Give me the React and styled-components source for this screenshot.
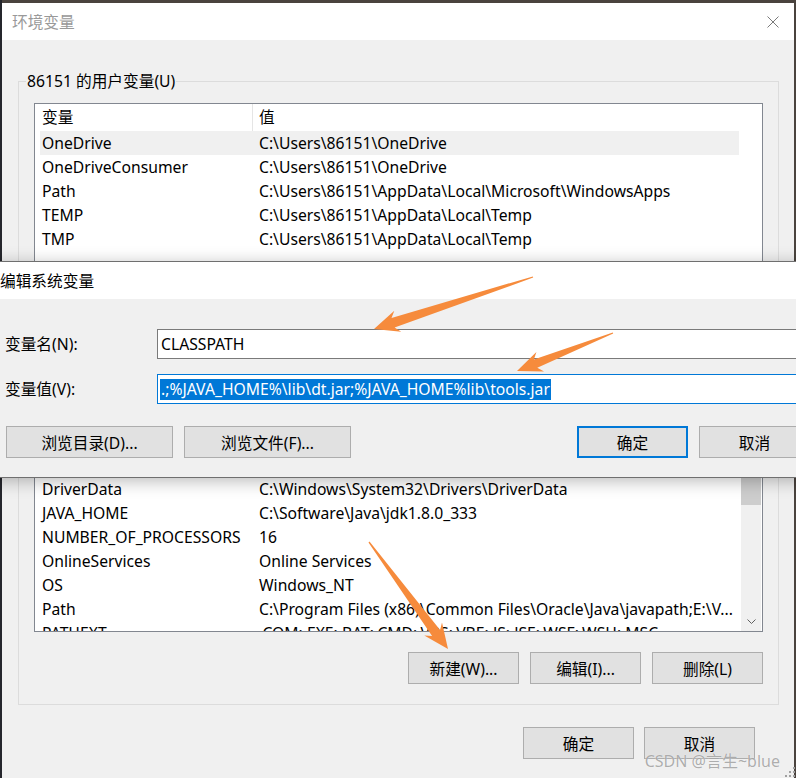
import styled, { createGlobalStyle } from 'styled-components'

const GlobalStyle = createGlobalStyle`
  html, body { margin: 0; padding: 0; }
  body {
    background: #3b3634;
    font-family: "Noto Sans", "Noto Sans CJK SC", sans-serif;
    font-size: 15.7px;
    color: #000;
    overflow: hidden;
  }
  * { box-sizing: border-box; }
`

const Screen = styled.div`
  position: relative;
  width: 796px;
  height: 778px;
  overflow: hidden;
  padding: 3px 0 0 2px;
  background: linear-gradient(90deg, #25262c 0 2px, #4a433e 2px);
`

const Window = styled.div`
  width: 792px;
  height: 790px;
  background: #f0f0f0;
`

const TitleBar = styled.div`
  height: 37px;
  background: #fff;
  display: flex;
  align-items: center;
  padding-left: ${p => p.$pad}px;
  color: ${p => (p.$active ? '#000' : '#999')};
  white-space: nowrap;
`

const TitleText = styled.span`
  flex: 1;
  line-height: 20px;
`

const CloseBox = styled.div`
  width: 42px;
  display: flex;
  justify-content: center;
`

const Body = styled.div`
  padding: 31px 15px 0 16px;
`

const Group = styled.fieldset`
  margin: ${p => p.$mt || 0}px 0 0;
  padding: 12px 7px ${p => p.$pb}px;
  border: 1px solid #dcdcdc;
  min-width: 0;
`

const Legend = styled.legend`
  padding: 0 1px;
  line-height: 20px;
`

const GroupInner = styled.div`
  padding: 0 8px;
`

const ListBox = styled.div`
  height: ${p => p.$h}px;
  border: 1px solid #828790;
  background: #fff;
  display: flex;
`

const ListContent = styled.div`
  flex: 1;
  overflow: hidden;
  padding-left: 5px;
`

const Columns = styled.div`
  display: grid;
  grid-template-columns: 213px 486px;
  width: 699px;
  height: ${p => p.$h}px;
  line-height: ${p => p.$h}px;
  background: ${p => (p.$selected ? '#f0f0f0' : 'transparent')};
  white-space: nowrap;
`

const NameCell = styled.div`
  padding-left: 2px;
  overflow: hidden;
  border-right: ${p => (p.$head ? '1px solid #e5e5e5' : 'none')};
`

const ValueCell = styled.div`
  padding-left: 6px;
  overflow: hidden;
`

const ScrollBar = styled.div`
  width: 20px;
  margin-right: 1px;
  background: #f0f0f0;
  display: flex;
  flex-direction: column;
`

const ScrollArrow = styled.div`
  height: 20px;
  display: flex;
  align-items: center;
  justify-content: center;
`

const Thumb = styled.div`
  height: 55px;
  margin-top: 4px;
  background: #cdcdcd;
`

const Track = styled.div`
  flex: 1;
`

const ButtonRow = styled.div`
  display: flex;
  justify-content: flex-end;
  gap: 11px;
  margin-top: ${p => p.$mt}px;
`

const Button = styled.button`
  width: ${p => p.$w || 111}px;
  height: 32px;
  padding: 0;
  background: #e1e1e1;
  border: ${p => (p.$default ? '2px solid #0078d7' : '1px solid #adadad')};
  font: inherit;
  color: #000;
  white-space: nowrap;
`

const Footer = styled.div`
  display: flex;
  justify-content: flex-end;
  gap: 10px;
  margin-top: 22px;
  padding-right: 24px;
`

const EditDialog = styled.div`
  position: absolute;
  top: 261px;
  left: -12px;
  width: 846px;
  border: 1px solid #6f6f6f;
  background: #f0f0f0;
  box-shadow: 0 3px 16px rgba(0, 0, 0, 0.28);
`

const EditBody = styled.div`
  padding: 30px 23px 19px 16px;
`

const FieldGrid = styled.div`
  display: grid;
  grid-template-columns: 152px 1fr;
  row-gap: 15px;
  align-items: center;
`

const Label = styled.label`
  line-height: 20px;
  white-space: nowrap;
`

const Field = styled.div`
  height: 30px;
  border: 1px solid ${p => (p.$focus ? '#0078d7' : '#7a7a7a')};
  background: #fff;
  display: flex;
  align-items: center;
  padding-left: ${p => (p.$focus ? 2 : 3)}px;
  white-space: nowrap;
  overflow: hidden;
`

const Selected = styled.span`
  background: #0078d7;
  color: #fff;
  line-height: 21px;
  padding: 0 1px;
`

const DialogButtons = styled.div`
  display: flex;
  gap: 11px;
  margin: 22px 0 0 1px;
`

const PushRight = styled.div`
  margin-left: auto;
  display: flex;
  gap: 11px;
`

const Overlay = styled.svg`
  position: absolute;
  left: 0;
  top: 0;
  pointer-events: none;
`

const Watermark = styled.div`
  position: absolute;
  right: 16px;
  bottom: 7px;
  font-size: 16px;
  line-height: 20px;
  color: rgba(120, 120, 120, 0.6);
  text-shadow: 0 0 1px rgba(255, 255, 255, 0.9);
  white-space: nowrap;
`

const Grip = styled.svg`
  position: absolute;
  right: 1px;
  bottom: 1px;
`

const userVars = [
  ['OneDrive', 'C:\\Users\\86151\\OneDrive'],
  ['OneDriveConsumer', 'C:\\Users\\86151\\OneDrive'],
  ['Path', 'C:\\Users\\86151\\AppData\\Local\\Microsoft\\WindowsApps'],
  ['TEMP', 'C:\\Users\\86151\\AppData\\Local\\Temp'],
  ['TMP', 'C:\\Users\\86151\\AppData\\Local\\Temp'],
]

const systemVars = [
  ['ComSpec', 'C:\\Windows\\system32\\cmd.exe'],
  ['DriverData', 'C:\\Windows\\System32\\Drivers\\DriverData'],
  ['JAVA_HOME', 'C:\\Software\\Java\\jdk1.8.0_333'],
  ['NUMBER_OF_PROCESSORS', '16'],
  ['OnlineServices', 'Online Services'],
  ['OS', 'Windows_NT'],
  ['Path', 'C:\\Program Files (x86)\\Common Files\\Oracle\\Java\\javapath;E:\\V...'],
  ['PATHEXT', '.COM;.EXE;.BAT;.CMD;.VBS;.VBE;.JS;.JSE;.WSF;.WSH;.MSC'],
]

// tapered arrow like the one a screenshot tool draws
function arrowPoints([tx, ty], [hx, hy], headLen, headHalf, shaftHalf) {
  const dx = hx - tx
  const dy = hy - ty
  const len = Math.hypot(dx, dy)
  const ux = dx / len
  const uy = dy / len
  const px = -uy
  const py = ux
  const bx = hx - ux * headLen
  const by = hy - uy * headLen
  const pts = [
    [tx + px * 0.6, ty + py * 0.6],
    [bx + ux * 2 + px * shaftHalf, by + uy * 2 + py * shaftHalf],
    [bx - ux * 3 + px * headHalf, by - uy * 3 + py * headHalf],
    [hx, hy],
    [bx - ux * 3 - px * headHalf, by - uy * 3 - py * headHalf],
    [bx + ux * 2 - px * shaftHalf, by + uy * 2 - py * shaftHalf],
    [tx - px * 0.6, ty - py * 0.6],
  ]
  return pts.map(p => p.map(v => v.toFixed(1)).join(',')).join(' ')
}

const arrows = [
  arrowPoints([533, 277], [374, 329], 22, 11, 5),
  arrowPoints([613, 333], [517, 371], 22, 10.5, 4.5),
  arrowPoints([369, 542], [448, 649], 22, 11, 5),
]

function CloseIcon() {
  return (
    <svg width="12" height="12" viewBox="0 0 12 12">
      <path d="M0.5 0.5 L11.5 11.5 M11.5 0.5 L0.5 11.5" stroke="#7a7a7a" strokeWidth="1" />
    </svg>
  )
}

function VarList({ rows, height, selected, scroll }) {
  return (
    <ListBox $h={height}>
      <ListContent>
        <Columns $h={27}>
          <NameCell $head>变量</NameCell>
          <ValueCell>值</ValueCell>
        </Columns>
        {rows.map(([name, value], i) => (
          <Columns key={name + i} $h={24} $selected={i === selected}>
            <NameCell>{name}</NameCell>
            <ValueCell>{value}</ValueCell>
          </Columns>
        ))}
      </ListContent>
      {scroll && (
        <ScrollBar>
          <ScrollArrow>
            <svg width="9" height="5" viewBox="0 0 9 5">
              <path d="M0.5 4.5 L4.5 0.5 L8.5 4.5" fill="none" stroke="#606060" />
            </svg>
          </ScrollArrow>
          <Thumb />
          <Track />
          <ScrollArrow>
            <svg width="9" height="5" viewBox="0 0 9 5">
              <path d="M0.5 0.5 L4.5 4.5 L8.5 0.5" fill="none" stroke="#606060" />
            </svg>
          </ScrollArrow>
        </ScrollBar>
      )}
    </ListBox>
  )
}

export default function App() {
  return (
    <>
      <GlobalStyle />
      <Screen>
        <Window>
          <TitleBar $pad={10}>
            <TitleText>环境变量</TitleText>
            <CloseBox>
              <CloseIcon />
            </CloseBox>
          </TitleBar>
          <Body>
            <Group $pb={12}>
              <Legend>86151 的用户变量(U)</Legend>
              <GroupInner>
                <VarList rows={userVars} height={216} selected={0} />
                <ButtonRow $mt={12}>
                  <Button>新建(N)...</Button>
                  <Button>编辑(E)...</Button>
                  <Button>删除(D)</Button>
                </ButtonRow>
              </GroupInner>
            </Group>
            <Group $mt={17} $pb={20}>
              <Legend>系统变量(S)</Legend>
              <GroupInner>
                <VarList rows={systemVars} height={207} scroll />
                <ButtonRow $mt={20}>
                  <Button>新建(W)...</Button>
                  <Button>编辑(I)...</Button>
                  <Button>删除(L)</Button>
                </ButtonRow>
              </GroupInner>
            </Group>
            <Footer>
              <Button>确定</Button>
              <Button>取消</Button>
            </Footer>
          </Body>
        </Window>

        <EditDialog>
          <TitleBar $pad={11} $active>
            <TitleText>编辑系统变量</TitleText>
          </TitleBar>
          <EditBody>
            <FieldGrid>
              <Label>变量名(N):</Label>
              <Field>CLASSPATH</Field>
              <Label>变量值(V):</Label>
              <Field $focus>
                <Selected>.;%JAVA_HOME%\lib\dt.jar;%JAVA_HOME%lib\tools.jar</Selected>
              </Field>
            </FieldGrid>
            <DialogButtons>
              <Button $w={167}>浏览目录(D)...</Button>
              <Button $w={167}>浏览文件(F)...</Button>
              <PushRight>
                <Button $default>确定</Button>
                <Button>取消</Button>
              </PushRight>
            </DialogButtons>
          </EditBody>
        </EditDialog>

        <Overlay width="796" height="778" viewBox="0 0 796 778">
          {arrows.map((pts, i) => (
            <polygon key={i} points={pts} fill="#f68b3c" />
          ))}
        </Overlay>

        <Watermark>CSDN @言生~blue</Watermark>
        <Grip width="11" height="11" viewBox="0 0 11 11">
          {[[9, 1], [9, 5], [5, 5], [9, 9], [5, 9], [1, 9]].map(([x, y], i) => (
            <rect key={i} x={x} y={y} width="2" height="2" fill="#a0a0a0" />
          ))}
        </Grip>
      </Screen>
    </>
  )
}
